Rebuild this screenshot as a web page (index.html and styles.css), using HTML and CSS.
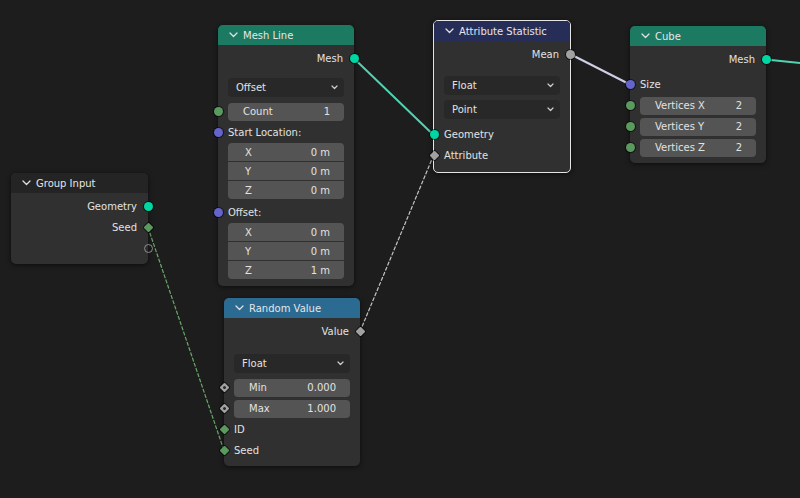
FILE: index.html
```html
<!DOCTYPE html>
<html>
<head>
<meta charset="utf-8">
<link rel="stylesheet" href="styles.css">
</head>
<body>
<div class="canvas">
  <svg class="links" width="800" height="498" viewBox="0 0 800 498">
    <line x1="354" y1="58.5" x2="433" y2="134.5" class="lk-geo"/>
    <line x1="766" y1="59.5" x2="800" y2="63" class="lk-geo"/>
    <line x1="571" y1="54.5" x2="630" y2="84.5" class="lk-flt"/>
    <line x1="148" y1="227.5" x2="224" y2="450.5" class="lk-seed"/>
    <line x1="360" y1="331.5" x2="433.5" y2="155.5" class="lk-attr"/>
  </svg>

  <!-- Group Input -->
  <div class="node n-group">
    <div class="head h-dark">
      <svg class="chev" width="9" height="6" viewBox="0 0 9 6"><polyline points="1,1 4.5,4.5 8,1"/></svg>
      <span>Group Input</span>
    </div>
    <div class="body b-group">
      <div class="row out">Geometry<i class="sock r geo"></i></div>
      <div class="row out">Seed<i class="sock r dia int"></i></div>
      <div class="row out"><i class="sock r hollow"></i></div>
    </div>
  </div>

  <!-- Mesh Line -->
  <div class="node n-meshline">
    <div class="head h-geo">
      <svg class="chev" width="9" height="6" viewBox="0 0 9 6"><polyline points="1,1 4.5,4.5 8,1"/></svg>
      <span>Mesh Line</span>
    </div>
    <div class="body b-meshline">
      <div class="row out">Mesh<i class="sock r geo"></i></div>
      <div class="gap g9"></div>
      <div class="select"><span>Offset</span><svg class="dd" width="7" height="5" viewBox="0 0 7 5"><polyline points="1,1 3.5,3.5 6,1"/></svg></div>
      <div class="gap g4"></div>
      <div class="row"><i class="sock l int"></i><div class="field"><span>Count</span><span>1</span></div></div>
      <div class="row">Start Location:<i class="sock l vec"></i></div>
      <div class="vecblock">
        <div class="vf"><span>X</span><span>0 m</span></div>
        <div class="vf"><span>Y</span><span>0 m</span></div>
        <div class="vf"><span>Z</span><span>0 m</span></div>
      </div>
      <div class="gap g3"></div>
      <div class="row">Offset:<i class="sock l vec"></i></div>
      <div class="vecblock">
        <div class="vf"><span>X</span><span>0 m</span></div>
        <div class="vf"><span>Y</span><span>0 m</span></div>
        <div class="vf"><span>Z</span><span>1 m</span></div>
      </div>
    </div>
  </div>

  <!-- Random Value -->
  <div class="node n-random">
    <div class="head h-blue">
      <svg class="chev" width="9" height="6" viewBox="0 0 9 6"><polyline points="1,1 4.5,4.5 8,1"/></svg>
      <span>Random Value</span>
    </div>
    <div class="body b-random">
      <div class="row out">Value<i class="sock r dia flt"></i></div>
      <div class="gap g12"></div>
      <div class="select"><span>Float</span><svg class="dd" width="7" height="5" viewBox="0 0 7 5"><polyline points="1,1 3.5,3.5 6,1"/></svg></div>
      <div class="gap g4"></div>
      <div class="row"><i class="sock l dia flt dot"></i><div class="field"><span>Min</span><span>0.000</span></div></div>
      <div class="row"><i class="sock l dia flt dot"></i><div class="field"><span>Max</span><span>1.000</span></div></div>
      <div class="row">ID<i class="sock l dia int"></i></div>
      <div class="row">Seed<i class="sock l dia int"></i></div>
    </div>
  </div>

  <!-- Attribute Statistic -->
  <div class="node n-attr">
    <div class="head h-navy">
      <svg class="chev" width="9" height="6" viewBox="0 0 9 6"><polyline points="1,1 4.5,4.5 8,1"/></svg>
      <span>Attribute Statistic</span>
    </div>
    <div class="body b-attr">
      <div class="row out">Mean<i class="sock r flt"></i></div>
      <div class="gap g11"></div>
      <div class="select"><span>Float</span><svg class="dd" width="7" height="5" viewBox="0 0 7 5"><polyline points="1,1 3.5,3.5 6,1"/></svg></div>
      <div class="gap g5"></div>
      <div class="select"><span>Point</span><svg class="dd" width="7" height="5" viewBox="0 0 7 5"><polyline points="1,1 3.5,3.5 6,1"/></svg></div>
      <div class="gap g5"></div>
      <div class="row">Geometry<i class="sock l geo"></i></div>
      <div class="row">Attribute<i class="sock l dia flt"></i></div>
    </div>
  </div>

  <!-- Cube -->
  <div class="node n-cube">
    <div class="head h-geo">
      <svg class="chev" width="9" height="6" viewBox="0 0 9 6"><polyline points="1,1 4.5,4.5 8,1"/></svg>
      <span>Cube</span>
    </div>
    <div class="body b-cube">
      <div class="row out">Mesh<i class="sock r geo"></i></div>
      <div class="gap g4"></div>
      <div class="row">Size<i class="sock l vec"></i></div>
      <div class="row"><i class="sock l int"></i><div class="field"><span>Vertices X</span><span>2</span></div></div>
      <div class="row"><i class="sock l int"></i><div class="field"><span>Vertices Y</span><span>2</span></div></div>
      <div class="row"><i class="sock l int"></i><div class="field"><span>Vertices Z</span><span>2</span></div></div>
    </div>
  </div>
</div>
</body>
</html>
```

FILE: styles.css
```css
* { box-sizing: border-box; }

html, body {
  margin: 0;
  padding: 0;
  background: #1d1d1d;
}

.canvas {
  position: relative;
  width: 800px;
  height: 498px;
  overflow: hidden;
  background: #1d1d1d;
  font-family: "DejaVu Sans", "Liberation Sans", sans-serif;
  font-size: 10px;
  color: #e2e2e2;
}

/* links */
.links {
  position: absolute;
  left: 0;
  top: 0;
  z-index: 0;
}
.lk-geo { stroke: #52d2b1; stroke-width: 2; }
.lk-flt { stroke: #cfd0e4; stroke-width: 2; }
.lk-seed { stroke: #6aa86b; stroke-width: 1.2; stroke-dasharray: 4 1.5; }
.lk-attr { stroke: #c4c4c4; stroke-width: 1.2; stroke-dasharray: 4 1.5; }

/* nodes */
.node {
  position: absolute;
  z-index: 1;
  background: #303030;
  border-radius: 5px;
  box-shadow: 0 1px 5px rgba(0, 0, 0, 0.6);
}
.n-group    { left: 11px;  top: 173px; width: 137px; }
.n-meshline { left: 218px; top: 25px;  width: 136px; }
.n-random   { left: 224px; top: 298px; width: 136px; }
.n-attr     { left: 433px; top: 20px;  width: 138px; border: 1px solid #e4e4e4; }
.n-cube     { left: 630px; top: 26px;  width: 136px; }

.head {
  height: 20px;
  display: flex;
  align-items: center;
  gap: 5px;
  padding-left: 11px;
  border-radius: 5px 5px 0 0;
  color: #e6e6e6;
}
.n-attr .head { border-radius: 4px 4px 0 0; }
.h-dark { background: #242424; }
.h-geo  { background: #1c7a63; }
.h-blue { background: #2b6a91; }
.h-navy { background: #262d56; }

.chev polyline, .dd polyline {
  fill: none;
  stroke: #e0e0e0;
  stroke-width: 1.3;
  stroke-linecap: round;
  stroke-linejoin: round;
}
.dd polyline { stroke: #cfcfcf; stroke-width: 1.2; }

.body { padding-top: 3px; }
.b-group    { padding-bottom: 5px; }
.b-meshline { padding-bottom: 7px; }
.b-random   { padding-bottom: 5px; }
.b-attr     { padding-bottom: 6px; }
.b-cube     { padding-bottom: 5px; }

.row {
  position: relative;
  height: 21px;
  display: flex;
  align-items: center;
  padding: 0 10px;
  white-space: nowrap;
}
.row.out {
  justify-content: flex-end;
  padding-right: 11px;
}

.gap { height: 0; }
.g3 { height: 3px; }
.g4 { height: 4px; }
.g5 { height: 5px; }
.g9 { height: 9px; }
.g11 { height: 11px; }
.g12 { height: 12px; }

.select {
  margin: 0 10px;
  height: 19px;
  background: #282828;
  border-radius: 4px;
  display: flex;
  align-items: center;
  justify-content: space-between;
  padding: 0 6px 0 8px;
}

.field {
  flex: 1;
  height: 18px;
  background: #545454;
  border-radius: 4px;
  display: flex;
  align-items: center;
  justify-content: space-between;
  padding: 0 14px 0 15px;
}

.vecblock {
  margin: 0 10px;
  display: flex;
  flex-direction: column;
  gap: 1px;
}
.vf {
  height: 18px;
  background: #545454;
  display: flex;
  align-items: center;
  justify-content: space-between;
  padding: 0 14px 0 17px;
}
.vf:first-child { border-radius: 4px 4px 0 0; }
.vf:last-child  { border-radius: 0 0 4px 4px; }

/* sockets */
.sock {
  position: absolute;
  top: 50%;
  width: 9px;
  height: 9px;
  margin-top: -4.5px;
  border-radius: 50%;
  box-shadow: 0 0 0 1px rgba(0, 0, 0, 0.55);
}
.sock.l { left: -4.5px; }
.sock.r { right: -4.5px; }
.geo { background: #00d6a3; }
.int { background: #5b9a5f; }
.vec { background: #6464cc; }
.flt { background: #a1a1a1; }
.sock.dia {
  width: 7px;
  height: 7px;
  margin-top: -3.5px;
  border-radius: 1px;
  transform: rotate(45deg);
}
.sock.dia.l { left: -3.5px; }
.sock.dia.r { right: -3.5px; }
.sock.dot::after {
  content: "";
  position: absolute;
  left: 2px;
  top: 2px;
  width: 3px;
  height: 3px;
  border-radius: 50%;
  background: #2a2a2a;
}
.sock.hollow {
  background: transparent;
  border: 1px solid #8c8c8c;
  box-shadow: none;
}
```
